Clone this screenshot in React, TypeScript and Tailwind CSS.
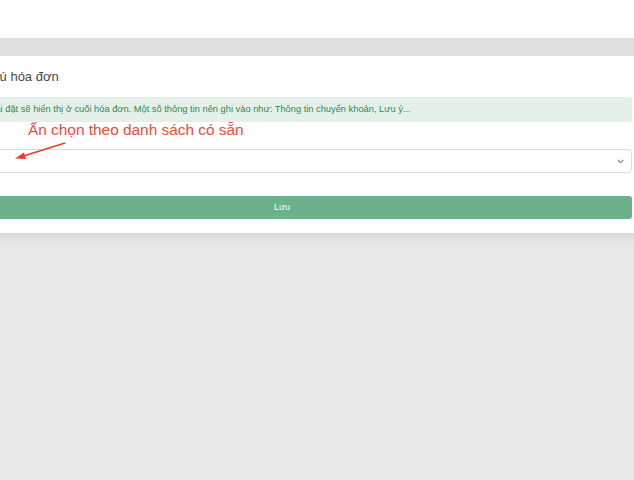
import React from 'react';

export default function App() {
  return (
    <div
      className="relative w-[634px] h-[480px] overflow-hidden bg-[#e8e8e8]"
      style={{ fontFamily: '"Liberation Sans", Arial, sans-serif' }}
    >
      <div className="h-[38px] bg-white" />
      <div className="h-[18px] bg-gradient-to-b from-[#dedede] to-[#e3e3e3]" />

      <div className="ml-[-80px] mr-[-10px] bg-white px-[12px] shadow-[0_4px_10px_rgba(0,0,0,0.08)]">
        <div className="h-[41px] flex items-center">
          <span className="ml-[30px] text-[13px] text-[#484848]">Ghi chú hóa đơn</span>
        </div>

        <div className="h-[25px] flex items-center bg-[#e5f0e9] rounded-[2px]">
          <span className="ml-[19px] text-[9.3px] text-[#2f8a4c]">
            Nội dung cài đặt sẽ hiển thị ở cuối hóa đơn. Một số thông tin nên ghi vào như: Thông tin chuyển khoản, Lưu ý...
          </span>
        </div>

        <div className="h-[27px]" />

        <div className="relative h-[24px] border border-[#dcdcdc] rounded-[4px] bg-white">
          <svg
            className="absolute right-[7px] top-[9px]"
            width="7"
            height="5"
            viewBox="0 0 7 5"
            fill="none"
          >
            <path d="M0.8 1 L3.5 3.7 L6.2 1" stroke="#8a8a8a" strokeWidth="1.1" />
          </svg>
        </div>

        <div className="h-[23px]" />

        <button className="w-full h-[23px] bg-[#6eb08b] rounded-[3px] text-white text-[9px] flex items-center justify-center">
          Lưu
        </button>

        <div className="h-[14px]" />
      </div>

      <div className="absolute left-[28px] top-[122px] text-[15.4px] text-[#f2493b] leading-none whitespace-nowrap">
        Ấn chọn theo danh sách có sẵn
      </div>

      <svg className="absolute left-0 top-[138px]" width="80" height="30" viewBox="0 0 80 30">
        <line x1="65" y1="5" x2="22" y2="18.5" stroke="#ef3b2c" strokeWidth="1.6" />
        <polygon points="15,20.5 24,14.5 26,21" fill="#ef3b2c" />
      </svg>
    </div>
  );
}
